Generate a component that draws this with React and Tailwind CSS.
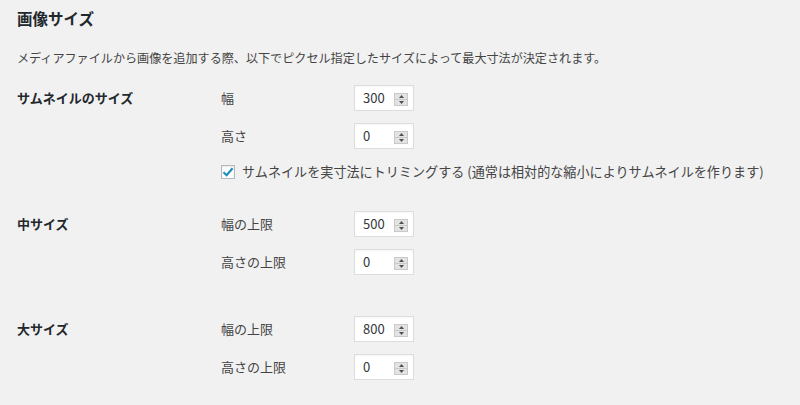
import React from 'react'

const font = { fontFamily: '"Noto Sans CJK JP", "Noto Sans", sans-serif' }

function Spinner() {
  return (
    <span className="absolute left-[39px] top-[7px] flex h-[13px] w-[14px] flex-col border border-[#c9c9c9] bg-[#e3e3e3]">
      <span className="flex flex-1 items-center justify-center border-b border-[#c9c9c9]">
        <svg width="5" height="3" viewBox="0 0 5 3"><path d="M2.5 0 L5 3 L0 3 Z" fill="#505050" /></svg>
      </span>
      <span className="flex flex-1 items-center justify-center">
        <svg width="5" height="3" viewBox="0 0 5 3"><path d="M0 0 L5 0 L2.5 3 Z" fill="#505050" /></svg>
      </span>
    </span>
  )
}

function NumberField({ value }) {
  return (
    <div className="relative h-[26px] w-[60px] border border-[#dddddd] bg-white shadow-[inset_0_1px_2px_rgba(0,0,0,0.04)]">
      <span className="absolute left-[8px] top-[4px] text-[13px] leading-[16px] text-[#32373c]">{value}</span>
      <Spinner />
    </div>
  )
}

function FieldRow({ label, value }) {
  return (
    <div className="flex h-[26px] items-center">
      <span className="w-[133px] text-[13px] text-[#444444]">{label}</span>
      <NumberField value={value} />
    </div>
  )
}

function Section({ title, rows, children, className }) {
  return (
    <div className={`flex ${className}`}>
      <div className="flex h-[26px] w-[204px] items-center text-[13px] font-bold text-[#23282d]">{title}</div>
      <div className="flex flex-col">
        {rows.map((r, i) => (
          <div key={r.label} className={i > 0 ? 'mt-[12px]' : ''}>
            <FieldRow label={r.label} value={r.value} />
          </div>
        ))}
        {children}
      </div>
    </div>
  )
}

export default function App() {
  return (
    <div className="h-[405px] w-[800px] overflow-hidden bg-[#f1f1f1] pl-[17px]" style={font}>
      <h2 className="pt-[8px] text-[15.5px] font-bold leading-[20px] text-[#23282d]">画像サイズ</h2>
      <p className="mt-[22px] text-[12.1px] leading-[16px] text-[#444444]">
        メディアファイルから画像を追加する際、以下でピクセル指定したサイズによって最大寸法が決定されます。
      </p>
      <Section
        className="mt-[19px]"
        title="サムネイルのサイズ"
        rows={[{ label: '幅', value: '300' }, { label: '高さ', value: '0' }]}
      >
        <label className="mt-[15px] flex items-center">
          <span className="flex h-[14px] w-[14px] items-center justify-center border border-[#b4b9be] bg-white shadow-[inset_0_1px_2px_rgba(0,0,0,0.1)]">
            <svg width="12" height="12" viewBox="0 0 12 12">
              <path d="M1.5 6.2 L4.6 9.2 L10.6 2.2" stroke="#1e8cbe" strokeWidth="2.2" fill="none" />
            </svg>
          </span>
          <span className="ml-[7px] text-[13.1px] leading-[16px] text-[#444444]">
            サムネイルを実寸法にトリミングする (通常は相対的な縮小によりサムネイルを作ります)
          </span>
        </label>
      </Section>
      <Section
        className="mt-[31px]"
        title="中サイズ"
        rows={[{ label: '幅の上限', value: '500' }, { label: '高さの上限', value: '0' }]}
      />
      <Section
        className="mt-[41px]"
        title="大サイズ"
        rows={[{ label: '幅の上限', value: '800' }, { label: '高さの上限', value: '0' }]}
      />
    </div>
  )
}
